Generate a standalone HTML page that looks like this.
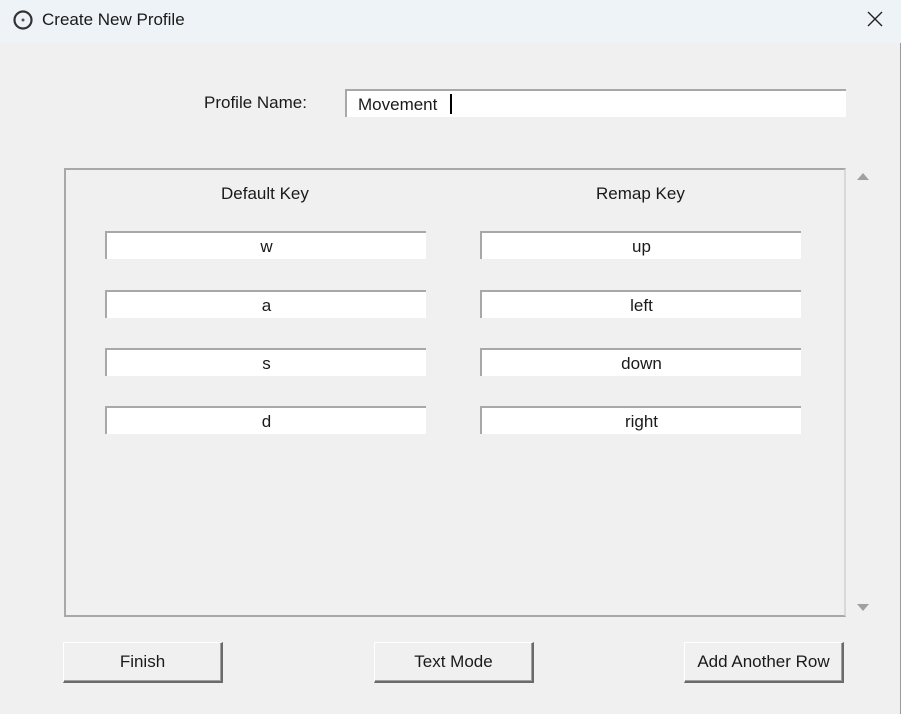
<!DOCTYPE html>
<html><head><style>
*{margin:0;padding:0;box-sizing:border-box}
body{width:901px;height:714px;background:#f0f0f0;font-family:"Liberation Sans",sans-serif;font-size:17px;color:#1a1a1a;position:relative;overflow:hidden}
.t{position:absolute;left:0;top:0;width:901px;height:43px;background:#eef3f7}
.a{position:absolute}
.e{position:absolute;background:#fff;border-top:2px solid #a8a8a8;border-left:2px solid #a8a8a8;text-align:center;line-height:28px;height:28px;font-size:17px}
.b{position:absolute;width:160px;height:41px;background:#f0f0f0;border-top:1px solid #fff;border-left:1px solid #fff;border-right:2px solid #6a6a6a;border-bottom:2px solid #6a6a6a;box-shadow:inset -1px -1px 0 #a0a0a0;text-align:center;line-height:38px;font-size:17px}
</style></head><body>
<div class="t">
<svg class="a" style="left:12px;top:9px" width="22" height="22"><circle cx="11" cy="11" r="8.5" fill="none" stroke="#333" stroke-width="2.2"/><circle cx="11" cy="11" r="1.5" fill="#555"/></svg>
<div class="a" style="left:42px;top:10px;font-size:17px">Create New Profile</div>
<svg class="a" style="left:867px;top:11px" width="16" height="16"><path d="M1 1L15 15M15 1L1 15" stroke="#222" stroke-width="1.4"/></svg>
</div>
<div class="a" style="right:0;top:43px;width:1px;height:671px;background:#9a9a9a"></div>
<div class="a" style="left:204px;top:93px;font-size:17px">Profile Name:</div>
<div class="e" style="left:345px;top:89px;width:501px;text-align:left;padding-left:11px;font-size:17px">Movement<span style="display:inline-block;width:2px;height:20px;background:#000;margin-left:13px;vertical-align:-4px"></span></div>
<div class="a" style="left:64px;top:168px;width:782px;height:449px;border:2px solid #a8a8a8;border-right-color:#d8d8d8;border-bottom-color:#a8a8a8"></div>
<div class="a" style="left:221px;top:184px;font-size:17px">Default Key</div>
<div class="a" style="left:596px;top:184px;font-size:17px">Remap Key</div>
<div class="e" style="left:105px;top:231px;width:321px">w</div>
<div class="e" style="left:480px;top:231px;width:321px">up</div>
<div class="e" style="left:105px;top:290px;width:321px">a</div>
<div class="e" style="left:480px;top:290px;width:321px">left</div>
<div class="e" style="left:105px;top:348px;width:321px">s</div>
<div class="e" style="left:480px;top:348px;width:321px">down</div>
<div class="e" style="left:105px;top:406px;width:321px">d</div>
<div class="e" style="left:480px;top:406px;width:321px">right</div>
<svg class="a" style="left:856px;top:171px" width="14" height="10"><path d="M1 9L7 2L13 9Z" fill="#a0a0a0"/></svg>
<svg class="a" style="left:856px;top:603px" width="14" height="10"><path d="M1 1L7 8L13 1Z" fill="#a0a0a0"/></svg>
<div class="b" style="left:63px;top:642px">Finish</div>
<div class="b" style="left:374px;top:642px">Text Mode</div>
<div class="b" style="left:684px;top:642px">Add Another Row</div>
</body></html>
